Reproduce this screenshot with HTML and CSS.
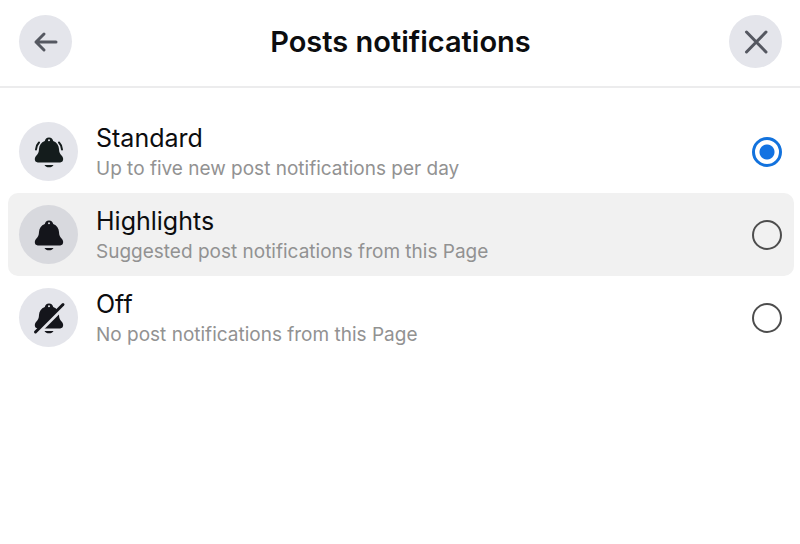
FILE: index.html
```html
<!DOCTYPE html>
<html lang="en">
<head>
    <meta charset="UTF-8">
    <meta name="viewport" content="width=device-width, initial-scale=1.0">
    <title>Posts notifications</title>
    <link rel="stylesheet" href="styles.css">
</head>
<body>
    <header class="header">
        <button class="round-button" type="button" aria-label="Back">
            <svg width="26" height="26" viewBox="0 0 26 26">
                <path d="M23 13H3M11 5L3 13l8 8"/>
            </svg>
        </button>
        <h1>Posts notifications</h1>
        <button class="round-button" type="button" aria-label="Close">
            <svg width="26" height="26" viewBox="0 0 26 26">
                <path d="M3.500 3l19.500 20M23 3L3.500 23"/>
            </svg>
        </button>
    </header>

    <main class="options">
        <!-- Standard -->
        <label class="option">
            <span class="option-icon">
                <svg class="bell bell-green" width="34" height="34" viewBox="0 0 34 34">
                    <path fill-rule="evenodd" d="M17 2.400c2.400 0 3.900 1.500 4.200 3.700 3.700 1.400 5.700 4.300 5.800 8 .1 3.200 1 4.800 3 7 2 2.200 1.400 6.300-1.700 6.300H5.700c-3.100 0-3.700-4.100-1.700-6.300 2-2.200 2.900-3.800 3-7 .1-3.700 2.100-6.600 5.800-8 .3-2.200 1.800-3.700 4.200-3.700zm0 1.800a1 1 0 1 0 0 2 1 1 0 0 0 0-2z"/>
                    <path d="M12.500 30h9c-.8 1.500-2.400 2.300-4.500 2.300s-3.700-.8-4.500-2.300z"/>
                    <path class="ring" d="M7 7.500Q4.200 10.300 4 14.500M27 7.500q2.800 2.800 3 7"/>
                </svg>
            </span>
            <span class="option-text">
                <span class="option-title">Standard</span>
                <span class="option-detail">Up to five new post notifications per day</span>
            </span>
            <input type="radio" name="notifications" value="standard" checked>
        </label>

        <!-- Highlights -->
        <label class="option option-active">
            <span class="option-icon">
                <svg class="bell" width="34" height="34" viewBox="0 0 34 34">
                    <path fill-rule="evenodd" d="M17 2.400c2.400 0 3.900 1.500 4.200 3.700 3.700 1.400 5.700 4.300 5.800 8 .1 3.200 1 4.800 3 7 2 2.200 1.400 6.300-1.700 6.300H5.700c-3.100 0-3.700-4.100-1.700-6.300 2-2.200 2.900-3.800 3-7 .1-3.700 2.100-6.600 5.800-8 .3-2.200 1.800-3.700 4.200-3.700zm0 1.800a1 1 0 1 0 0 2 1 1 0 0 0 0-2z"/>
                    <path d="M12.500 30h9c-.8 1.500-2.400 2.300-4.500 2.300s-3.700-.8-4.500-2.300z"/>
                </svg>
            </span>
            <span class="option-text">
                <span class="option-title">Highlights</span>
                <span class="option-detail">Suggested post notifications from this Page</span>
            </span>
            <input type="radio" name="notifications" value="highlights">
        </label>

        <!-- Off -->
        <label class="option">
            <span class="option-icon">
                <svg class="bell" width="34" height="34" viewBox="0 0 34 34">
                    <path fill-rule="evenodd" d="M17 2.400c2.400 0 3.900 1.500 4.200 3.700 3.700 1.400 5.700 4.300 5.800 8 .1 3.200 1 4.800 3 7 2 2.200 1.400 6.300-1.700 6.300H5.700c-3.100 0-3.700-4.100-1.700-6.300 2-2.200 2.900-3.800 3-7 .1-3.700 2.100-6.600 5.800-8 .3-2.200 1.800-3.700 4.200-3.700zm0 1.800a1 1 0 1 0 0 2 1 1 0 0 0 0-2z"/>
                    <path d="M12.500 30h9c-.8 1.500-2.400 2.300-4.500 2.300s-3.700-.8-4.500-2.300z"/>
                    <path class="slash-gap" d="M32.500 5L6 31.500"/>
                    <path class="slash" d="M31 3.500L3.500 31"/>
                </svg>
            </span>
            <span class="option-text">
                <span class="option-title">Off</span>
                <span class="option-detail">No post notifications from this Page</span>
            </span>
            <input type="radio" name="notifications" value="off">
        </label>
    </main>
</body>
</html>
```

FILE: styles.css
```css
body {
    margin: 0;
    font-family: Inter, 'Liberation Sans', sans-serif;
    background-color: #fff;
    color: #0c0d0f;
}
.header {
    display: flex;
    justify-content: space-between;
    align-items: center;
    padding: 15px 18px 18px 19px;
    border-bottom: 2px solid #ececed;
}
h1 {
    margin: 0;
    font-size: 29px;
    font-weight: 600;
    line-height: 36px;
}
.round-button {
    display: flex;
    justify-content: center;
    align-items: center;
    width: 53px;
    height: 53px;
    padding: 0;
    border: none;
    border-radius: 50%;
    background-color: #e4e5eb;
    cursor: pointer;
}
.round-button path {
    fill: none;
    stroke: #555861;
    stroke-width: 3;
    stroke-linecap: round;
    stroke-linejoin: round;
}
.options {
    padding: 22px 6px 22px 8px;
}
.option {
    display: flex;
    align-items: center;
    gap: 18px;
    padding: 11px 12px 11px 11px;
    border-radius: 10px;
    cursor: pointer;
}
.option-active {
    background-color: #f1f1f1;
}
.option-icon {
    display: flex;
    flex-shrink: 0;
    justify-content: center;
    align-items: center;
    width: 59px;
    height: 59px;
    border-radius: 50%;
    background-color: #e4e5eb;
}
.option-active .option-icon {
    background-color: #d8d9de;
}
.bell {
    fill: #14151b;
}
.bell-green {
    fill: #141c1c;
}
.ring {
    fill: none;
    stroke: #141c1c;
    stroke-width: 2;
    stroke-linecap: round;
}
.slash {
    stroke: #14151b;
    stroke-width: 3;
    stroke-linecap: round;
}
.slash-gap {
    stroke: #e4e5eb;
    stroke-width: 4;
}
.option-text {
    display: flex;
    flex: 1;
    flex-direction: column;
}
.option-title {
    font-size: 25px;
    font-weight: 400;
    line-height: 34px;
}
.option-detail {
    font-size: 19px;
    line-height: 27px;
    color: #929292;
}
input[type="radio"] {
    appearance: none;
    flex-shrink: 0;
    width: 30px;
    height: 30px;
    margin: 0;
    border: 2px solid #4d4d4d;
    border-radius: 50%;
    cursor: pointer;
}
input[type="radio"]:checked {
    border: 3px solid #1272dd;
    background: radial-gradient(circle, #1272e2 7px, transparent 8px);
}
```
